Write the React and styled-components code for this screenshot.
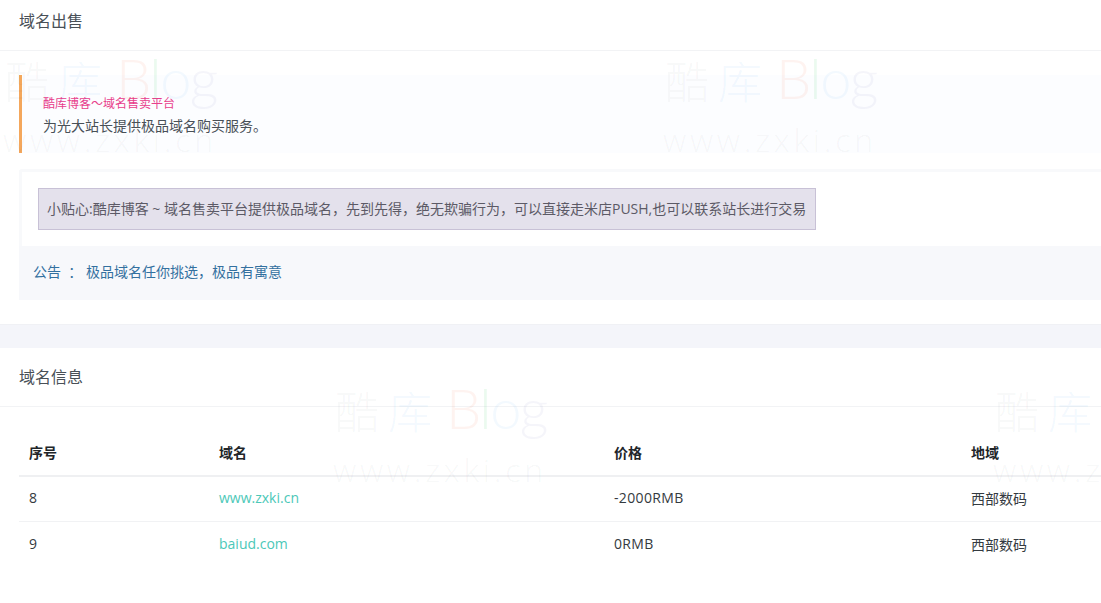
import React from 'react';
import styled, { createGlobalStyle } from 'styled-components';

const GlobalStyle = createGlobalStyle`
  html, body {
    margin: 0;
    padding: 0;
    background: #fff;
    overflow: hidden;
  }
  body {
    font-family: "Open Sans", "Noto Sans CJK SC", sans-serif;
    font-size: 14px;
    color: #444;
  }
`

const Page = styled.div`
  position: relative;
  width: 1101px;
  height: 603px;
  overflow: hidden;
`

const Card = styled.section`
  background: #fff;
`

const CardHeader = styled.h2`
  margin: 0;
  height: ${(p) => p.$height}px;
  padding: ${(p) => p.$top}px 19px 0;
  box-sizing: border-box;
  border-bottom: 1px solid #f2f3f5;
  font-size: 16px;
  font-weight: 400;
  line-height: 24px;
  color: #495057;
`

const CardBody = styled.div`
  padding: 24px 0 24px 19px;
`

const Quote = styled.blockquote`
  margin: 0 0 16px;
  height: 78px;
  box-sizing: border-box;
  padding: 19px 0 0 21px;
  background: #fcfdff;
  border-left: 3px solid #f4a75c;
`

const QuoteTitle = styled.div`
  font-size: 12px;
  line-height: 19px;
  color: #e83e8c;
`

const QuoteText = styled.div`
  font-size: 14px;
  line-height: 26px;
  color: #495057;
`

const Panel = styled.div`
  width: 1100px;
  border: 3px solid #f8f9fb;
  border-bottom: 0;
  border-radius: 3px;
`

const PanelBody = styled.div`
  height: 74px;
  box-sizing: border-box;
  padding: 16px 0 0 16px;
`

const Notice = styled.div`
  display: inline-block;
  height: 42px;
  box-sizing: border-box;
  padding: 0 9px 0 8px;
  background: #e4e1ec;
  border: 1px solid #c8c1d6;
  font-size: 14px;
  line-height: 40px;
  white-space: nowrap;
  color: #5c5a66;
`

const PanelFooter = styled.div`
  height: 54px;
  margin: 0 -3px;
  padding-left: 14px;
  background: #f7f8fb;
  font-size: 14px;
  line-height: 52px;
  color: #33709f;
`

const Gap = styled.div`
  height: 23px;
  background: #f4f5fa;
  border-top: 1px solid #f0f1f5;
`

const TableWrap = styled.div`
  padding: 23px 0 0 19px;
`

const Table = styled.table`
  width: 1150px;
  border-collapse: collapse;
  table-layout: fixed;
`

const HeadCell = styled.th`
  width: ${(p) => p.$width}px;
  height: 46px;
  padding: 0 10px 2px;
  box-sizing: border-box;
  border-bottom: 2px solid #eff0f2;
  text-align: left;
  font-size: 14px;
  font-weight: 700;
  color: #212529;
`

const Cell = styled.td`
  height: 45px;
  padding: 0 10px ${(p) => (p.$last ? 0 : 2)}px;
  box-sizing: border-box;
  border-bottom: ${(p) => (p.$last ? 'none' : '1px solid #f1f2f4')};
  font-size: 14px;
  color: #343a40;
`

const PriceCell = styled(Cell)`
  letter-spacing: 0.35px;
`

const DomainLink = styled.a`
  color: #4cc8b8;
  text-decoration: none;
`

/* site-wide watermark, repeated over the whole page */
const Watermark = styled.div`
  position: absolute;
  left: ${(p) => p.$x}px;
  top: ${(p) => p.$y}px;
  width: 216px;
  pointer-events: none;
  user-select: none;
  white-space: nowrap;
`

const MarkLogo = styled.div`
  height: 60px;
  font-size: 44px;
  line-height: 60px;
  font-weight: 300;
`

const MarkCjk = styled.span`
  margin-right: ${(p) => p.$gap}px;
  color: ${(p) => p.$color};
`

const MarkLatin = styled.span`
  font-family: "Lato", sans-serif;
  font-size: 56px;
  font-weight: 300;
  letter-spacing: -1.5px;
  color: ${(p) => p.$color};
`

const MarkUrl = styled.div`
  margin: 12px 0 0 -2px;
  font-family: "Open Sans", sans-serif;
  font-size: 32px;
  font-weight: 300;
  line-height: 40px;
  letter-spacing: 3.8px;
  color: rgba(60, 70, 90, 0.05);
`

const rows = [
  { id: 8, domain: 'www.zxki.cn', price: '-2000RMB', region: '西部数码' },
  { id: 9, domain: 'baiud.com', price: '0RMB', region: '西部数码' },
]

const marks = [
  { x: 5, y: 48 },
  { x: 665, y: 48 },
  { x: 335, y: 378 },
  { x: 995, y: 378 },
]

function App() {
  return (
    <Page>
      <GlobalStyle />
      <Card>
        <CardHeader $height={51} $top={9}>域名出售</CardHeader>
        <CardBody>
          <Quote>
            <QuoteTitle>酷库博客～域名售卖平台</QuoteTitle>
            <QuoteText>为光大站长提供极品域名购买服务。</QuoteText>
          </Quote>
          <Panel>
            <PanelBody>
              <Notice>小贴心:酷库博客 ~ 域名售卖平台提供极品域名，先到先得，绝无欺骗行为，可以直接走米店PUSH,也可以联系站长进行交易</Notice>
            </PanelBody>
            <PanelFooter>公告{'\u00a0\u00a0'}： 极品域名任你挑选，极品有寓意</PanelFooter>
          </Panel>
        </CardBody>
      </Card>
      <Gap />
      <Card>
        <CardHeader $height={59} $top={17}>域名信息</CardHeader>
        <TableWrap>
          <Table>
            <thead>
              <tr>
                <HeadCell $width={190}>序号</HeadCell>
                <HeadCell $width={395}>域名</HeadCell>
                <HeadCell $width={357}>价格</HeadCell>
                <HeadCell $width={208}>地域</HeadCell>
              </tr>
            </thead>
            <tbody>
              {rows.map((row, i) => (
                <tr key={row.id}>
                  <Cell $last={i === rows.length - 1}>{row.id}</Cell>
                  <Cell $last={i === rows.length - 1}><DomainLink href="#">{row.domain}</DomainLink></Cell>
                  <PriceCell $last={i === rows.length - 1}>{row.price}</PriceCell>
                  <Cell $last={i === rows.length - 1}>{row.region}</Cell>
                </tr>
              ))}
            </tbody>
          </Table>
        </TableWrap>
      </Card>
      {marks.map((m) => (
        <Watermark key={`${m.x}-${m.y}`} $x={m.x} $y={m.y}>
          <MarkLogo>
            <MarkCjk $gap={9} $color="rgba(60, 70, 90, 0.05)">酷</MarkCjk>
            <MarkCjk $gap={14} $color="rgba(80, 170, 240, 0.07)">库</MarkCjk>
            <MarkLatin $color="rgba(240, 100, 70, 0.08)">B</MarkLatin>
            <MarkLatin $color="rgba(90, 210, 120, 0.12)">l</MarkLatin>
            <MarkLatin $color="rgba(80, 170, 240, 0.07)">o</MarkLatin>
            <MarkLatin $color="rgba(90, 90, 170, 0.06)">g</MarkLatin>
          </MarkLogo>
          <MarkUrl>www.zxki.cn</MarkUrl>
        </Watermark>
      ))}
    </Page>
  )
}

export default App;
